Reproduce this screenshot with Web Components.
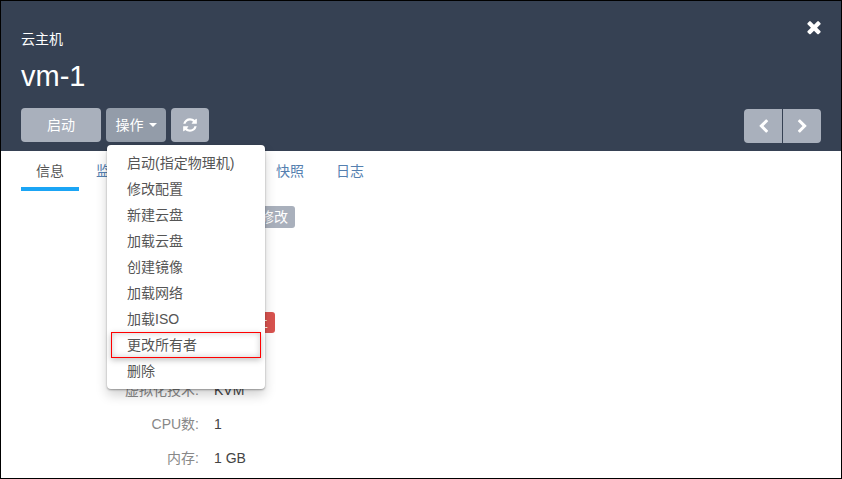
<!DOCTYPE html>
<html lang="zh">
<head>
<meta charset="utf-8">
<title>云主机</title>
<style>
  html, body { margin: 0; height: 100%; background: #fff; }
  body { font: 14px/20px "Liberation Sans", "Noto Sans CJK SC", sans-serif; color: #555; }
</style>
</head>
<body>
<vm-panel>
  <vm-header slot="header" kicker="云主机" title="vm-1"></vm-header>
  <vm-tabs slot="tabs"></vm-tabs>
  <info-row><info-badge offset="39" lift="3">修改</info-badge></info-row>
  <info-row></info-row>
  <info-row></info-row>
  <info-row><info-badge color="#d9534f" offset="5" height="21">已停止</info-badge></info-row>
  <info-row></info-row>
  <info-row label="虚拟化技术:">KVM</info-row>
  <info-row label="CPU数:">1</info-row>
  <info-row label="内存:">1 GB</info-row>
  <action-menu slot="menu">
    <menu-item>启动(指定物理机)</menu-item>
    <menu-item>修改配置</menu-item>
    <menu-item>新建云盘</menu-item>
    <menu-item>加载云盘</menu-item>
    <menu-item>创建镜像</menu-item>
    <menu-item>加载网络</menu-item>
    <menu-item>加载ISO</menu-item>
    <menu-item marked>更改所有者</menu-item>
    <menu-item>删除</menu-item>
  </action-menu>
</vm-panel>

<script>
// Font Awesome 4 glyphs, all in a 1792 box
const ICONS = {
  refresh: "M1639 1056q0 5-1 7-64 268-268 434.5t-478 166.5q-146 0-282.5-55t-243.5-157l-129 129q-19 19-45 19t-45-19-19-45v-448q0-26 19-45t45-19h448q26 0 45 19t19 45-19 45l-137 137q71 66 161 102t187 36q134 0 250-65t186-179q11-17 53-117 8-23 30-23h192q13 0 22.5 9.5t9.5 22.5zm25-800v448q0 26-19 45t-45 19h-448q-26 0-45-19t-19-45 19-45l138-138q-148-137-349-137-134 0-250 65t-186 179q-11 17-53 117-8 23-30 23h-199q-13 0-22.5-9.5t-9.5-22.5v-7q65-268 270-434.5t480-166.5q146 0 284 55.5t245 156.5l130-129q19-19 45-19t45 19 19 45z",
  left: "M1427 301l-531 531 531 531q19 19 19 45t-19 45l-166 166q-19 19-45 19t-45-19l-742-742q-19-19-19-45t19-45l742-742q19-19 45-19t45 19l166 166q19 19 19 45t-19 45z",
  right: "M1363 877l-742 742q-19 19-45 19t-45-19l-166-166q-19-19-19-45t19-45l531-531-531-531q-19-19-19-45t19-45l166-166q19-19 45-19t45 19l742 742q19 19 19 45t-19 45z",
  times: "M1490 1322q0 40-28 68l-136 136q-28 28-68 28t-68-28l-294-294-294 294q-28 28-68 28t-68-28l-136-136q-28-28-28-68t28-68l294-294-294-294q-28-28-28-68t28-68l136-136q28-28 68-28t68 28l294 294 294-294q28-28 68-28t68 28l136 136q28 28 28 68t-28 68l-294 294 294 294q28 28 28 68z",
};
const icon = (name, size) =>
  `<svg width="${size}" height="${size}" viewBox="0 0 1792 1792" fill="#fff"><path d="${ICONS[name]}"/></svg>`;

class VmPanel extends HTMLElement {
  constructor() {
    super();
    this.attachShadow({ mode: "open" });
    this.shadowRoot.innerHTML = `
      <style>
        :host {
          display: block;
          position: relative;
          box-sizing: border-box;
          height: 479px;
          border: 1px solid #000;
          overflow: hidden;
        }
        .body { padding-top: 12px; }
      </style>
      <slot name="header"></slot>
      <slot name="tabs"></slot>
      <div class="body"><slot></slot></div>
      <slot name="menu"></slot>
    `;
  }
}

class VmHeader extends HTMLElement {
  constructor() {
    super();
    this.attachShadow({ mode: "open" });
  }

  connectedCallback() {
    this.shadowRoot.innerHTML = `
      <style>
        :host {
          display: block;
          position: relative;
          height: 150px;
          box-sizing: border-box;
          padding: 29px 20px 0;
          background: #364153;
          color: #fff;
        }
        .kicker { font-size: 14px; line-height: 18px; }
        h1 { margin: 8px 0 11px; font-size: 29px; line-height: 41px; font-weight: 400; }
        .bar { display: flex; align-items: flex-start; }
        .left { display: flex; gap: 5px; }
        .nav { display: flex; gap: 1px; margin: 1px 0 0 auto; }
        button {
          display: flex;
          align-items: center;
          justify-content: center;
          height: 34px;
          padding: 0;
          border: 0;
          border-radius: 4px;
          background: #a9b0bc;
          color: #fff;
          font: inherit;
        }
        .start { width: 80px; }
        .ops { width: 60px; background: #939ca9; }
        .refresh { width: 38px; }
        .caret {
          margin-left: 5px;
          border-top: 4px solid #fff;
          border-left: 4px solid transparent;
          border-right: 4px solid transparent;
        }
        .nav button { width: 38px; }
        .nav button:first-child { border-radius: 4px 0 0 4px; }
        .nav button:last-child { border-radius: 0 4px 4px 0; }
        .close { position: absolute; top: 16px; right: 17px; display: flex; }
      </style>
      <div class="kicker">${this.getAttribute("kicker")}</div>
      <h1>${this.getAttribute("title")}</h1>
      <div class="bar">
        <div class="left">
          <button class="start">启动</button>
          <button class="ops">操作<span class="caret"></span></button>
          <button class="refresh">${icon("refresh", 16)}</button>
        </div>
        <div class="nav">
          <button>${icon("left", 15)}</button>
          <button>${icon("right", 15)}</button>
        </div>
      </div>
      <div class="close">${icon("times", 20)}</div>
    `;
  }
}

class VmTabs extends HTMLElement {
  constructor() {
    super();
    this.attachShadow({ mode: "open" });
    // the two middle tabs sit behind the open menu, their names can't be read
    const tabs = ["信息", "监控", "", "", "快照", "日志"];
    this.shadowRoot.innerHTML = `
      <style>
        :host { display: flex; height: 40px; padding-left: 20px; }
        a {
          box-sizing: border-box;
          width: 60px;
          padding-top: 10px;
          line-height: 20px;
          text-align: center;
          color: #5580b0;
        }
        a.active {
          width: 58px;
          margin-right: 1px;
          height: 40px;
          color: #555;
          border-bottom: 4px solid #1ba5f5;
        }
      </style>
      ${tabs
        .map((t, i) => `<a class="${i === 0 ? "active" : ""}">${t}</a>`)
        .join("")}
    `;
  }
}

class InfoRow extends HTMLElement {
  constructor() {
    super();
    this.attachShadow({ mode: "open" });
  }

  connectedCallback() {
    this.shadowRoot.innerHTML = `
      <style>
        :host {
          display: flex;
          align-items: center;
          gap: 15px;
          height: 34px;
        }
        .label { width: 198px; text-align: right; color: #888; }
        .value { color: #444; }
      </style>
      <div class="label">${this.getAttribute("label") || ""}</div>
      <div class="value"><slot></slot></div>
    `;
  }
}

class InfoBadge extends HTMLElement {
  constructor() {
    super();
    this.attachShadow({ mode: "open" });
  }

  connectedCallback() {
    const color = this.getAttribute("color") || "#a9b0bc";
    const height = this.getAttribute("height") || 22;
    this.shadowRoot.innerHTML = `
      <style>
        :host {
          display: block;
          box-sizing: border-box;
          height: ${height}px;
          padding: 0 7px;
          margin-left: ${this.getAttribute("offset") || 0}px;
          margin-bottom: ${(this.getAttribute("lift") || 0) * 2}px;
          border-radius: 3px;
          line-height: ${height}px;
          color: #fff;
          background: ${color};
        }
      </style>
      <slot></slot>
    `;
  }
}

class ActionMenu extends HTMLElement {
  constructor() {
    super();
    this.attachShadow({ mode: "open" });
    this.shadowRoot.innerHTML = `
      <style>
        :host {
          position: absolute;
          left: 106px;
          top: 144px;
          display: block;
          width: 158px;
          box-sizing: border-box;
          padding: 5px 0;
          background: #fff;
          border-radius: 4px;
          box-shadow: 0 1px 2px rgba(0, 0, 0, .35), 0 6px 12px rgba(0, 0, 0, .18);
        }
      </style>
      <slot></slot>
    `;
  }
}

class MenuItem extends HTMLElement {
  constructor() {
    super();
    this.attachShadow({ mode: "open" });
    this.shadowRoot.innerHTML = `
      <style>
        :host {
          display: block;
          position: relative;
          height: 26px;
          padding-left: 20px;
          line-height: 26px;
          color: #555;
        }
        :host([marked])::after {
          content: "";
          position: absolute;
          top: 0;
          bottom: 0;
          left: 4px;
          right: 4px;
          border: 1px solid #f00;
          box-shadow: 0 2px 6px rgba(0, 0, 0, .25), inset 0 0 6px rgba(0, 0, 0, .2);
        }
      </style>
      <slot></slot>
    `;
  }
}

customElements.define("vm-panel", VmPanel);
customElements.define("vm-header", VmHeader);
customElements.define("vm-tabs", VmTabs);
customElements.define("info-row", InfoRow);
customElements.define("info-badge", InfoBadge);
customElements.define("action-menu", ActionMenu);
customElements.define("menu-item", MenuItem);
</script>
</body>
</html>
